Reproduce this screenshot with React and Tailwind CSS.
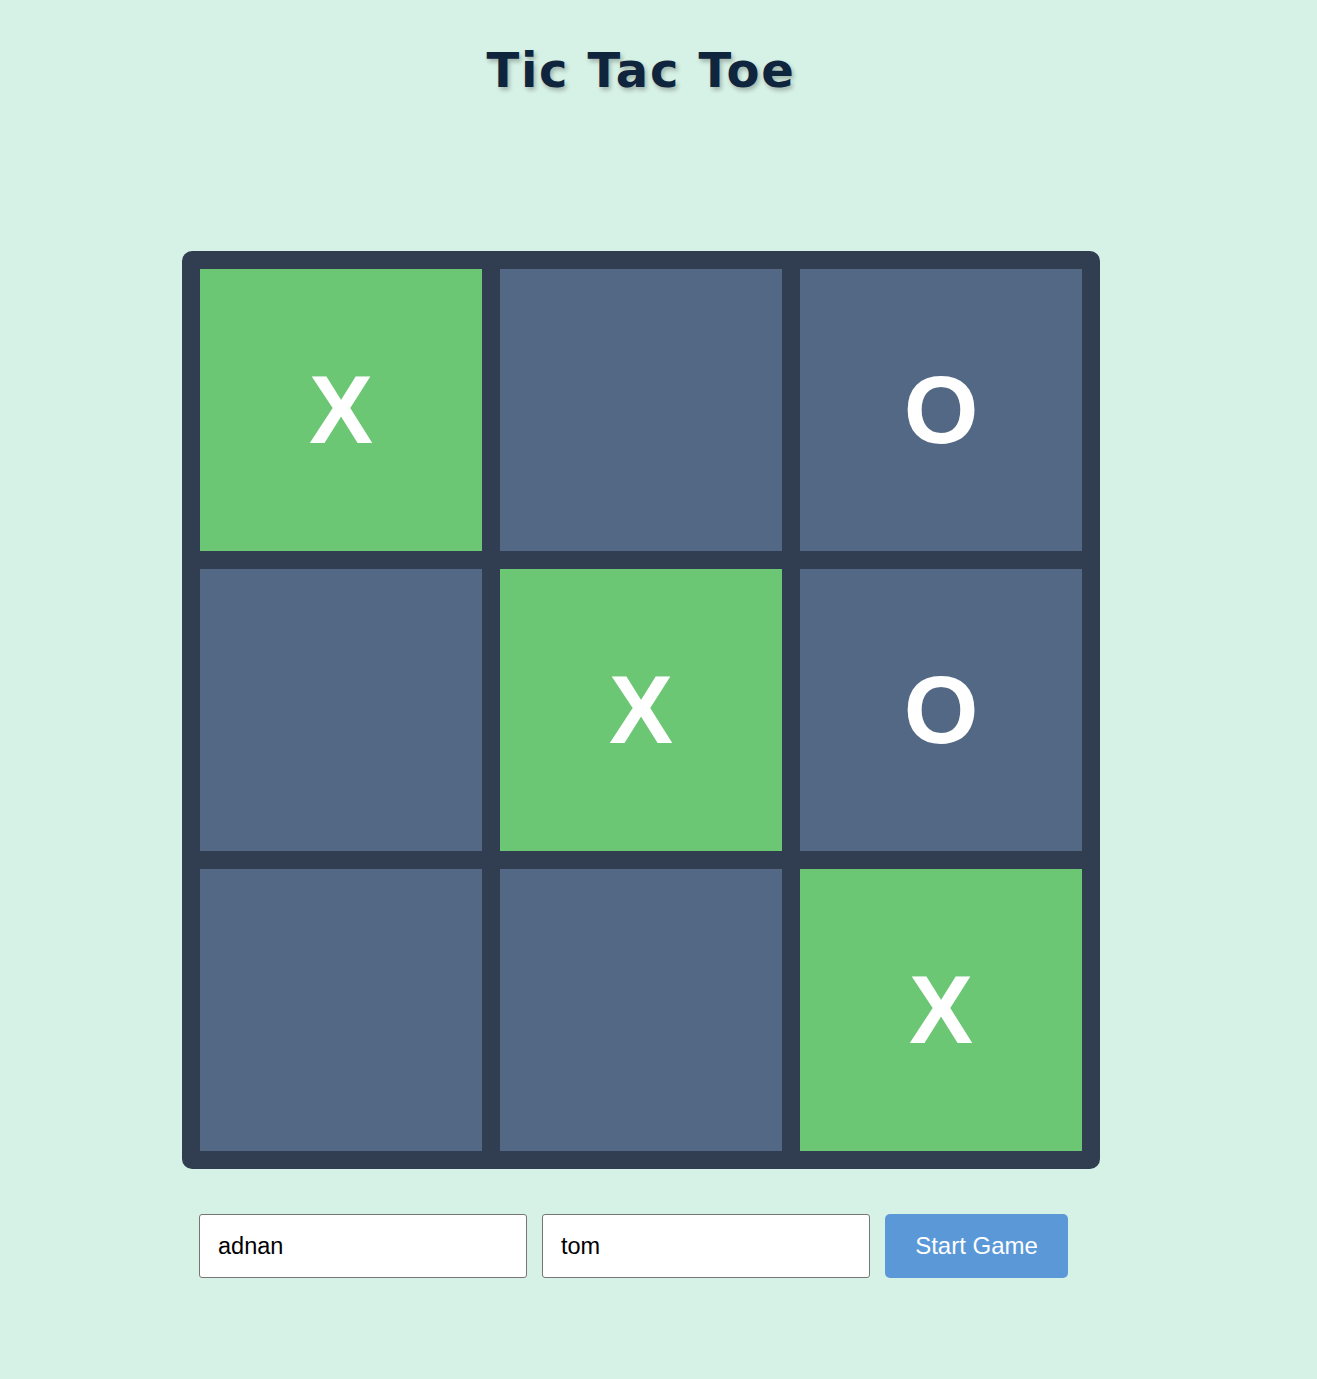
import React, { useState } from 'react'

const initialBoard = ['X', '', 'O', '', 'X', 'O', '', '', 'X']
const winLine = [0, 4, 8]

const App = () => {
  const [board] = useState(initialBoard)
  const [playerOne, setPlayerOne] = useState('adnan')
  const [playerTwo, setPlayerTwo] = useState('tom')

  return (
    <div className="min-h-[1379px] bg-[#d6f1e5] font-['Liberation_Sans',Arial,sans-serif]">
      <div className="w-[918px] ml-[182px] pt-[40px]">
        <h1 className="text-center text-[48px] leading-[60px] font-bold tracking-[1.7px] text-[#0f243d] font-['DejaVu_Sans',sans-serif] [text-shadow:2px_3px_4px_rgba(0,0,0,0.25)]">
          Tic Tac Toe
        </h1>

        {/* Board */}
        <div className="mt-[151px] grid grid-cols-3 p-[9px] bg-[#313e51] rounded-[10px]">
          {board.map((cell, i) => (
            <button
              key={i}
              className={`h-[300px] border-[9px] border-[#313e51] flex items-center justify-center text-[96px] font-bold text-white leading-none ${
                winLine.includes(i) ? 'bg-[#6bc774]' : 'bg-[#526885]'
              }`}
            >
              {cell}
            </button>
          ))}
        </div>

        {/* Players */}
        <div className="mt-[45px] ml-[17px] flex gap-[15px]">
          <input
            value={playerOne}
            onChange={(e) => setPlayerOne(e.target.value)}
            className="w-[328px] h-[64px] px-[18px] bg-white border border-[#767676] rounded-[3px] text-[23.5px] text-black outline-none"
          />
          <input
            value={playerTwo}
            onChange={(e) => setPlayerTwo(e.target.value)}
            className="w-[328px] h-[64px] px-[18px] bg-white border border-[#767676] rounded-[3px] text-[23.5px] text-black outline-none"
          />
          <button className="w-[183px] h-[64px] bg-[#5b98d8] text-white text-[24px] rounded-[5px]">
            Start Game
          </button>
        </div>
      </div>
    </div>
  )
}

export default App
